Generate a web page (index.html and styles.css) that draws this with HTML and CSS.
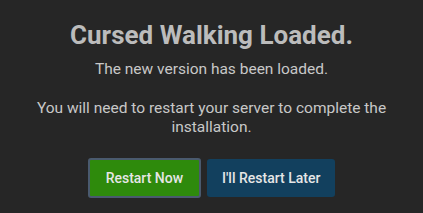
FILE: index.html
```html
<!DOCTYPE html>
<html lang="en">
<head>
    <meta charset="UTF-8">
    <title>Update Loaded</title>
    <link rel="stylesheet" href="styles.css">
</head>
<body>

<div class="update-dialog">
    <h2 class="title">Cursed Walking Loaded.</h2>
    <p class="subtitle">The new version has been loaded.</p>
    <p class="message">You will need to restart your server to complete the installation.</p>

    <div class="action-buttons">
        <button class="restart-btn">Restart Now</button>
        <button class="later-btn">I'll Restart Later</button>
    </div>
</div>

</body>
</html>
```

FILE: styles.css
```css
body {
    margin: 0;
    background: #262626;
    font-family: Roboto, "Liberation Sans", sans-serif;
}
.update-dialog {
    width: 423px;
    height: 213px;
    padding-top: 20px;
    box-sizing: border-box;
    text-align: center;
    color: #c8c8c8;
}
.title {
    margin: 0;
    font-size: 26px;
    line-height: 30px;
    font-weight: 700;
    color: #bcbcbc;
}
.subtitle {
    margin: 9px 0 0;
    font-size: 15.5px;
    line-height: 20px;
}
.message {
    margin: 20px 30px 0;
    font-size: 15.5px;
    line-height: 19px;
}
.action-buttons {
    margin-top: 21px;
    display: flex;
    justify-content: center;
    align-items: center;
    gap: 6px;
}
.action-buttons button {
    font-family: Roboto, "Liberation Sans", sans-serif;
    font-size: 14px;
    font-weight: 500;
    color: #e6e6e6;
    border-radius: 3px;
    cursor: pointer;
}
.restart-btn {
    background: #2e8a0c;
    border: 2px solid #4a5a6e;
    height: 40px;
    padding: 0 16px;
}
.later-btn {
    background: #12405e;
    border: none;
    height: 38px;
    padding: 0 15px;
}
```
